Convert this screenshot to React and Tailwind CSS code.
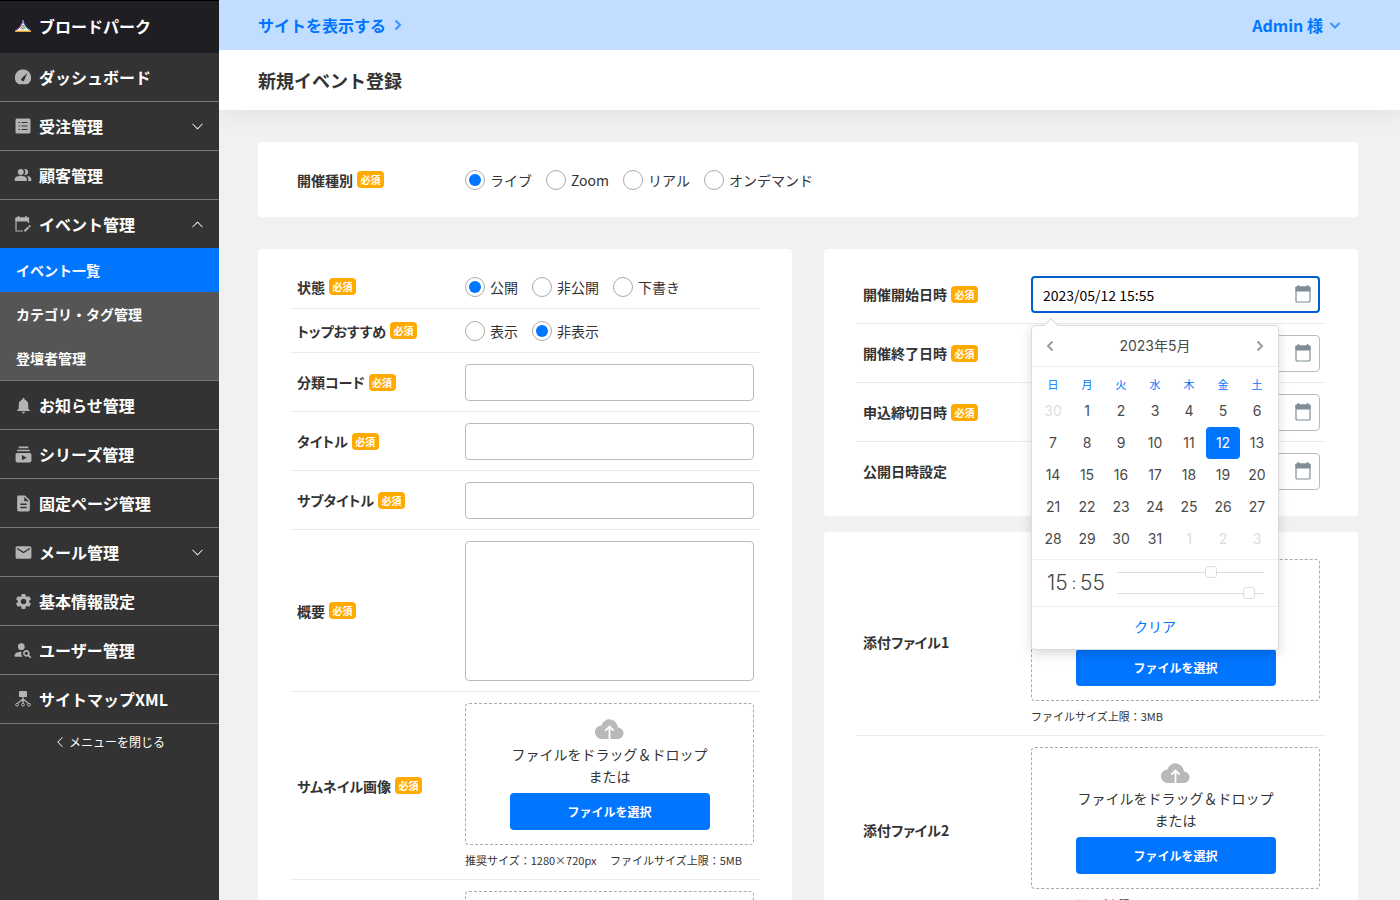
import React, { useState } from 'react';
import { BsChevronDown, BsChevronUp, BsChevronLeft } from 'react-icons/bs';
import { MdPeopleAlt, MdNotifications, MdSubscriptions, MdEmail, MdSettings, MdPersonSearch, MdDescription } from 'react-icons/md';

const LogoIcon = () => (
  <svg viewBox="0 0 16 16" className="w-4 h-4" fill="none">
    <path d="M8 2C7.500 7 4.500 10.500 0.500 13H15.500C11.500 10.500 8.500 7 8 2Z" fill="#fff" />
    <path d="M8 2C7.200 7 4 10.500 0.500 12.500" stroke="#9a5bd8" strokeWidth="1" />
    <path d="M8 2C8.800 7 12 10.500 15.500 12.500" stroke="#4a9bf0" strokeWidth="1" />
    <path d="M8 7L5.500 11" stroke="#e8502e" strokeWidth="1" />
    <path d="M8 7L10.500 11" stroke="#3fa84a" strokeWidth="1" />
    <path d="M6.500 11.200L8 9L9.500 11.200Z" fill="#3fa84a" />
    <path d="M0 13.200H16" stroke="#f6b73c" strokeWidth="1.400" />
  </svg>
);

const GaugeIcon = () => (
  <svg viewBox="0 0 16 16" className="w-4 h-4">
    <path d="M8 .5A8 8 0 0 0 2.300 14.200C2.900 14.800 3.500 15.200 4.400 15.200H11.600C12.500 15.200 13.100 14.800 13.700 14.200A8 8 0 0 0 8 .5Z" fill="currentColor" />
    <path d="M12.300 4L9.300 11A1.600 1.600 0 1 1 6.700 9.300Z" fill="#333" />
  </svg>
);

const ListIcon = () => (
  <svg viewBox="0 0 16 16" className="w-4 h-4">
    <rect x="0.500" y="0.500" width="15" height="15" rx="1.500" fill="currentColor" />
    <path d="M3.500 4.500h1.500M3.500 8h1.500M3.500 11.500h1.500M6.500 4.500h6M6.500 8h6M6.500 11.500h6" stroke="#333" strokeWidth="1.200" />
  </svg>
);

const EventIcon = () => (
  <svg viewBox="0 0 16 16" className="w-4 h-4" fill="none" stroke="currentColor">
    <path d="M13.500 7V2H1v13h7" strokeWidth="1.200" />
    <path d="M1 2h12.500v3H1z" fill="currentColor" />
    <path d="M3.500 0v2M11 0v2" strokeWidth="1.500" />
    <path d="M9.500 15.300l4-4" strokeWidth="2" />
    <path d="M14 10.700l1.200-1.200" strokeWidth="2" />
  </svg>
);

const SitemapIcon = () => (
  <svg viewBox="0 0 16 16" className="w-4 h-4" fill="none" stroke="currentColor">
    <rect x="4" y="0" width="8" height="6" rx="0.500" fill="currentColor" stroke="none" />
    <path d="M8 6v6M8 8l-5 4M8 8l5 4" strokeWidth="1.300" />
    <circle cx="2" cy="13.700" r="1.400" />
    <circle cx="8" cy="13.700" r="1.400" />
    <circle cx="14" cy="13.700" r="1.400" />
  </svg>
);

const CalendarIcon = () => (
  <svg viewBox="0 0 16 18" className="w-4 h-[18px]">
    <path d="M3.500 0v3M12.500 0v3" stroke="#808d96" strokeWidth="1.500" />
    <rect x="1" y="2" width="14" height="15" rx="1" fill="none" stroke="#808d96" strokeWidth="1.200" />
    <rect x="0.500" y="1.500" width="15" height="5" rx="1" fill="#808d96" />
  </svg>
);

const CloudIcon = () => (
  <svg viewBox="0 0 29 21" className="w-[29px] h-[21px] my-1">
    <path d="M7 21A6.800 6.800 0 0 1 6.500 7.400A8.300 8.300 0 0 1 22.800 9.600A5.700 5.700 0 0 1 23 21Z" fill="#b9b9b9" />
    <path d="M14.500 21V8.500M10.300 12.700L14.500 8.500L18.700 12.700" fill="none" stroke="#fff" strokeWidth="1.800" />
  </svg>
);

// heavier arrows used in the top bar and the date picker
const arrowPaths = {
  down: 'M1.500 4L6 8.500L10.500 4',
  left: 'M8.500 1.500L4 6L8.500 10.500',
  right: 'M3.500 1.500L8 6L3.500 10.500',
};

const Arrow = ({ dir, className = 'w-3 h-3' }) => (
  <svg viewBox="0 0 12 12" className={className} fill="none" stroke="currentColor" strokeWidth="2">
    <path d={arrowPaths[dir]} />
  </svg>
);

const menu = [
  { label: 'ダッシュボード', icon: <GaugeIcon /> },
  { label: '受注管理', icon: <ListIcon />, arrow: 'down' },
  { label: '顧客管理', icon: <MdPeopleAlt size={18} /> },
  { label: 'イベント管理', icon: <EventIcon />, arrow: 'up', children: ['イベント一覧', 'カテゴリ・タグ管理', '登壇者管理'] },
  { label: 'お知らせ管理', icon: <MdNotifications size={19} /> },
  { label: 'シリーズ管理', icon: <MdSubscriptions size={19} /> },
  { label: '固定ページ管理', icon: <MdDescription size={19} /> },
  { label: 'メール管理', icon: <MdEmail size={19} />, arrow: 'down' },
  { label: '基本情報設定', icon: <MdSettings size={19} /> },
  { label: 'ユーザー管理', icon: <MdPersonSearch size={20} /> },
  { label: 'サイトマップXML', icon: <SitemapIcon /> },
];

const Sidebar = () => (
  <aside className="relative z-10 w-[219px] shrink-0 bg-[#333] text-white">
    <a href="#" className="flex items-center h-[53px] px-[15px] pb-px gap-2 bg-[#1f1e22] shadow-[inset_0_1px_0_#000] font-bold">
      <LogoIcon />
      ブロードパーク
    </a>
    <nav>
      {menu.map((item) => (
        <div key={item.label} className="border-b border-[#777]">
          <a href="#" className="flex items-center h-12 px-[15px] gap-2 font-bold">
            <span className="flex w-4 justify-center text-[#b4b4b4] [&>svg]:shrink-0">{item.icon}</span>
            <span className="flex-1">{item.label}</span>
            {item.arrow === 'down' && <BsChevronDown size={13} />}
            {item.arrow === 'up' && <BsChevronUp size={13} />}
          </a>
          {item.children && item.children.map((child, i) => (
            <a key={child} href="#"
              className={`flex items-center h-11 px-4 text-sm font-bold ${i === 0 ? 'bg-[#0075ff]' : 'bg-[#555]'}`}>
              {child}
            </a>
          ))}
        </div>
      ))}
    </nav>
    <button type="button" className="flex items-center justify-center gap-[3px] w-full h-9 text-xs">
      <BsChevronLeft size={12} />
      メニューを閉じる
    </button>
  </aside>
);

const Card = ({ children }) => (
  <section className="bg-white rounded px-8 py-4">{children}</section>
);

const Row = ({ label, required, htmlFor, last, children }) => (
  <div className={`flex items-center pt-[11px] pb-[10px] ${last ? '' : 'border-b border-[#ebebeb]'}`}>
    <div className="flex items-center gap-1 w-[175px] shrink-0 pl-[7px] pb-px">
      <label htmlFor={htmlFor} className="text-sm font-bold [font-feature-settings:'palt']">{label}</label>
      {required && (
        <span className="w-[27px] h-[17px] rounded bg-[#ffaa00] text-white text-center text-[10px] leading-[17px] font-bold">必須</span>
      )}
    </div>
    <div className="flex-1 min-w-0 pr-[6px]">{children}</div>
  </div>
);

const Radios = ({ name, options, initial }) => {
  const [value, setValue] = useState(initial);
  return (
    <div className="flex gap-[14px] h-[22px]">
      {options.map((opt, i) => (
        <label key={opt} className="flex items-center gap-[5px] text-sm">
          <input type="radio" id={i === 0 ? name : undefined} name={name} checked={value === opt} onChange={() => setValue(opt)}
            className="appearance-none w-5 h-5 p-[3px] rounded-full border border-[#aaa] bg-clip-content checked:bg-[#0075ff]" />
          {opt}
        </label>
      ))}
    </div>
  );
};

const TextField = ({ id }) => (
  <input id={id} type="text" className="block w-full h-[37px] px-3 rounded border border-[#bbb] text-sm" />
);

const DateField = ({ id, value = '', active, children }) => (
  <div className="relative">
    <input id={id} type="text" defaultValue={value}
      className={`block w-full h-[37px] rounded text-sm text-black outline-none ${active ? 'px-[10px] border-2 border-[#005fce]' : 'px-[11px] border border-[#bbb]'}`} />
    <span className="absolute right-[9px] top-[9px]"><CalendarIcon /></span>
    {children}
  </div>
);

const DropZone = ({ id, note }) => (
  <div>
    <div className="flex flex-col items-center pt-[10px] pb-[14px] rounded border border-dashed border-[#aaa] text-sm leading-[22px]">
      <CloudIcon />
      <p className="text-center">ファイルをドラッグ＆ドロップ<br />または</p>
      <button id={id} type="button" className="mt-[6px] w-[200px] h-[37px] rounded bg-[#0075ff] text-white text-xs font-bold">
        ファイルを選択
      </button>
    </div>
    <p className="mt-[6px] text-[11px] leading-[18px] whitespace-pre">{note}</p>
  </div>
);

const weekdays = ['日', '月', '火', '水', '木', '金', '土'];

// May 2023, padded with the neighbouring months
const days = [{ day: 30, other: true }];
for (let d = 1; d <= 31; d++) days.push({ day: d });
for (let d = 1; d <= 3; d++) days.push({ day: d, other: true });

const rangeClass = "block w-full h-3 appearance-none bg-transparent [&::-webkit-slider-runnable-track]:h-px [&::-webkit-slider-runnable-track]:bg-[#dedede] [&::-webkit-slider-thumb]:appearance-none [&::-webkit-slider-thumb]:w-3 [&::-webkit-slider-thumb]:h-3 [&::-webkit-slider-thumb]:-mt-[6px] [&::-webkit-slider-thumb]:rounded-[3px] [&::-webkit-slider-thumb]:border [&::-webkit-slider-thumb]:border-[#dedede] [&::-webkit-slider-thumb]:bg-white";

const DatePicker = () => {
  const [selected, setSelected] = useState(12);
  const [hour, setHour] = useState(15);
  const [minute, setMinute] = useState(55);

  return (
    <div className="absolute z-10 left-0 top-[49px] w-[248px] bg-white border border-[#dbdbdb] rounded shadow-[0_4px_12px_rgba(0,0,0,0.15)] text-sm text-[#4a4a4a] font-['Inter','Noto_Sans_CJK_JP',sans-serif]">
      <span className="absolute left-[14px] -top-[6px] w-[10px] h-[10px] rotate-45 bg-white border-t border-l border-[#dbdbdb]"></span>
      <div className="flex items-center justify-between h-[41px] px-3 border-b border-[#efefef]">
        <button type="button" aria-label="前の月" className="text-[#9c9c9c]"><Arrow dir="left" /></button>
        <span>2023年5月</span>
        <button type="button" aria-label="次の月" className="text-[#9c9c9c]"><Arrow dir="right" /></button>
      </div>
      <div className="px-1 pt-2 pb-1 border-b border-[#efefef]">
        <div className="grid grid-cols-7 text-center text-[11px] leading-5 text-[#0075ff]">
          {weekdays.map((w) => <span key={w}>{w}</span>)}
        </div>
        <div className="grid grid-cols-7">
          {days.map(({ day, other }, i) => (
            <button key={i} type="button" onClick={() => !other && setSelected(day)}
              className={`h-8 rounded ${other ? 'text-[#dedede]' : day === selected ? 'bg-[#0075ff] text-white' : ''}`}>
              {day}
            </button>
          ))}
        </div>
      </div>
      <div className="flex items-center gap-3 h-[47px] pl-[15px] pr-[14px] border-b border-[#efefef]">
        <div className="flex items-center justify-between w-[58px] text-[21px] font-light">
          <span>{hour}</span>
          <span className="text-base">:</span>
          <span>{minute}</span>
        </div>
        <div className="flex-1 min-w-0 flex flex-col gap-[9px]">
          <input type="range" aria-label="時" min="0" max="23" value={hour} onChange={(e) => setHour(e.target.value)} className={rangeClass} />
          <input type="range" aria-label="分" min="0" max="59" value={minute} onChange={(e) => setMinute(e.target.value)} className={rangeClass} />
        </div>
      </div>
      <button type="button" className="w-full h-[42px] pb-[2px] text-[#0075ff]">クリア</button>
    </div>
  );
};

const App = () => {
  return (
    <div className="flex min-h-screen bg-[#f1f1f1] text-[#333] text-base font-['Noto_Sans_CJK_JP',sans-serif]">
      <Sidebar />
      <div className="flex-1 min-w-0">
        <header className="shadow-[0_4px_24px_rgba(0,0,0,0.07)]">
          <div className="flex items-center justify-between h-[50px] pl-[39px] pr-[59px] bg-[#c1ddff] text-[#0075ff] font-bold">
            <a href="#" className="flex items-center gap-[6px]">
              サイトを表示する
              <Arrow dir="right" className="w-3 h-3 opacity-70" />
            </a>
            <button type="button" className="flex items-center gap-[6px]">
              Admin 様
              <Arrow dir="down" className="w-3 h-3 opacity-70" />
            </button>
          </div>
          <div className="flex items-center h-[60px] pl-[39px] bg-white">
            <h1 className="text-lg font-bold">新規イベント登録</h1>
          </div>
        </header>

        <main className="flex flex-col gap-8 pt-8 pb-8 pl-[39px] pr-[42px]">
          <Card>
            <Row label="開催種別" htmlFor="type" required last>
              <Radios name="type" options={['ライブ', 'Zoom', 'リアル', 'オンデマンド']} initial="ライブ" />
            </Row>
          </Card>

          <div className="grid grid-cols-2 items-start gap-8">
            <Card>
              <Row label="状態" htmlFor="status" required>
                <Radios name="status" options={['公開', '非公開', '下書き']} initial="公開" />
              </Row>
              <Row label="トップおすすめ" htmlFor="recommend" required>
                <Radios name="recommend" options={['表示', '非表示']} initial="非表示" />
              </Row>
              <Row label="分類コード" htmlFor="code" required><TextField id="code" /></Row>
              <Row label="タイトル" htmlFor="title" required><TextField id="title" /></Row>
              <Row label="サブタイトル" htmlFor="subtitle" required><TextField id="subtitle" /></Row>
              <Row label="概要" htmlFor="summary" required>
                <textarea id="summary" className="block w-full h-[140px] px-3 py-2 rounded border border-[#bbb] text-sm resize-none" />
              </Row>
              <Row label="サムネイル画像" htmlFor="thumbnail" required>
                <DropZone id="thumbnail" note={'推奨サイズ：1280×720px　 ファイルサイズ上限：5MB'} />
              </Row>
              <Row label="メイン画像" htmlFor="mainimage" last>
                <DropZone id="mainimage" note="ファイルサイズ上限：5MB" />
              </Row>
            </Card>

            <div className="flex flex-col gap-4">
              <Card>
                <Row label="開催開始日時" htmlFor="start" required>
                  <DateField id="start" value="2023/05/12 15:55" active>
                    <DatePicker />
                  </DateField>
                </Row>
                <Row label="開催終了日時" htmlFor="end" required><DateField id="end" /></Row>
                <Row label="申込締切日時" htmlFor="deadline" required><DateField id="deadline" /></Row>
                <Row label="公開日時設定" htmlFor="publish" last><DateField id="publish" /></Row>
              </Card>
              <Card>
                <Row label="添付ファイル1" htmlFor="file1">
                  <DropZone id="file1" note="ファイルサイズ上限：3MB" />
                </Row>
                <Row label="添付ファイル2" htmlFor="file2" last>
                  <DropZone id="file2" note="ファイルサイズ上限：3MB" />
                </Row>
              </Card>
            </div>
          </div>
        </main>
      </div>
    </div>
  );
};

export default App;
